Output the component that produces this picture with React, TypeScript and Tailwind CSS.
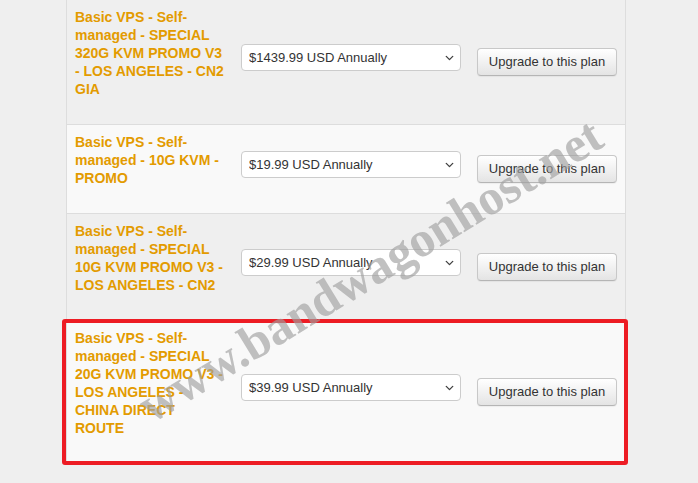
import { ChevronDown } from 'lucide-react';

const plans = [
  {
    name: 'Basic VPS - Self-managed - SPECIAL 320G KVM PROMO V3 - LOS ANGELES - CN2 GIA',
    price: '$1439.99 USD Annually',
    bg: 'bg-[#efefef]',
  },
  {
    name: 'Basic VPS - Self-managed - 10G KVM - PROMO',
    price: '$19.99 USD Annually',
    bg: 'bg-[#f9f9f9]',
  },
  {
    name: 'Basic VPS - Self-managed - SPECIAL 10G KVM PROMO V3 - LOS ANGELES - CN2',
    price: '$29.99 USD Annually',
    bg: 'bg-[#efefef]',
  },
  {
    name: 'Basic VPS - Self-managed - SPECIAL 20G KVM PROMO V3 - LOS ANGELES - CHINA DIRECT ROUTE',
    price: '$39.99 USD Annually',
    bg: 'bg-[#f9f9f9]',
    highlight: true,
  },
];

function PlanRow({ plan, last }: { plan: (typeof plans)[number]; last: boolean }) {
  return (
    <div
      className={`relative grid grid-cols-[166px_236px_156px] ${plan.bg} ${
        last ? '' : 'border-b border-[#dddddd]'
      }`}
    >
      {/* Plan name */}
      <div className="px-2 pt-2 pb-[26px] text-[14px] leading-[18px] font-bold text-[#e39b00]">
        {plan.name}
      </div>

      {/* Billing cycle */}
      <div className="flex items-center px-2">
        <div className="relative mb-[9px] w-[220px]">
          <select
            defaultValue={plan.price}
            className="block h-[27px] w-full appearance-none rounded-[4px] border border-[#cccccc] bg-white pl-[7px] pr-6 text-[13px] text-[#333333] outline-none"
          >
            <option>{plan.price}</option>
          </select>
          <ChevronDown
            strokeWidth={2.5}
            className="pointer-events-none absolute right-[5px] top-1/2 h-[13px] w-[13px] -translate-y-1/2 text-[#444444]"
          />
        </div>
      </div>

      {/* Action */}
      <div className="flex items-center px-2">
        <button className="h-[28px] w-[140px] rounded-[4px] border border-[#c8c8c8] border-b-[#b5b5b5] bg-gradient-to-b from-white to-[#e4e4e4] text-[13px] text-[#333333] shadow-[0_1px_1px_rgba(0,0,0,0.05)]">
          Upgrade to this plan
        </button>
      </div>

      {plan.highlight && (
        <div className="pointer-events-none absolute -left-[5px] -right-[3px] -top-[2px] -bottom-[2px] rounded-[3px] border-4 border-[#ed1c24]" />
      )}
    </div>
  );
}

export default function App() {
  return (
    <div
      className="relative h-[483px] w-full overflow-hidden bg-[#efefef]"
      style={{ fontFamily: '"Liberation Sans", Arial, Helvetica, sans-serif' }}
    >
      <div className="ml-[66px] w-[560px] border-x border-[#dddddd]">
        {plans.map((plan, i) => (
          <PlanRow key={plan.price} plan={plan} last={i === plans.length - 1} />
        ))}
      </div>

      {/* Watermark */}
      <div className="pointer-events-none absolute left-[370px] top-[270px] -translate-x-1/2 -translate-y-1/2 -rotate-[31.5deg] whitespace-nowrap font-['Liberation_Serif',serif] text-[50px] font-bold leading-none text-[#a0a0a0]/65">
        www.bandwagonhost.net
      </div>
    </div>
  );
}
